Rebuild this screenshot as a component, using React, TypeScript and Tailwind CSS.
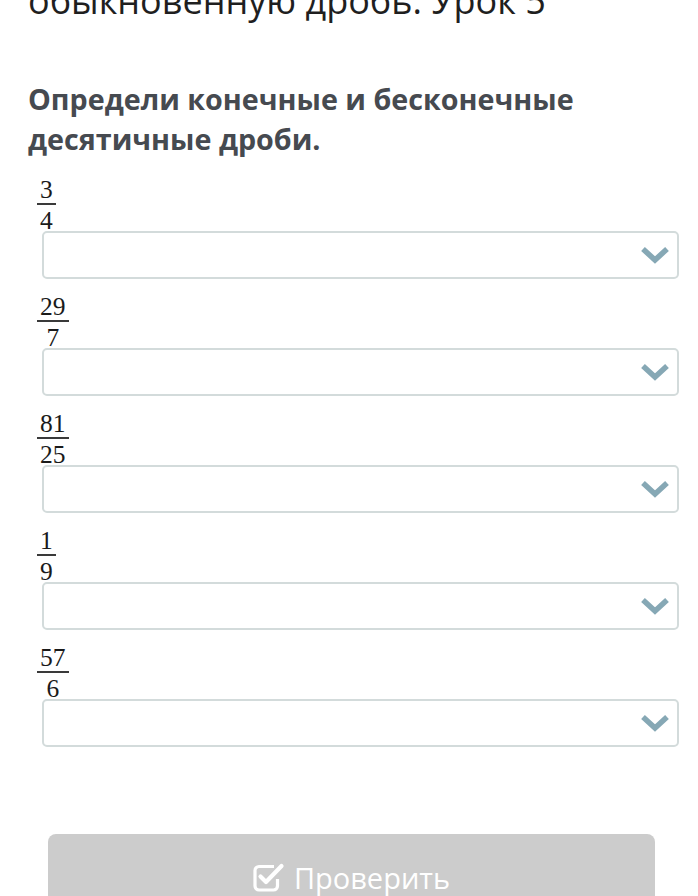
import React from "react";

const items: [string, string][] = [
  ["3", "4"],
  ["29", "7"],
  ["81", "25"],
  ["1", "9"],
  ["57", "6"],
];

function Chevron() {
  return (
    <svg width="30" height="20" viewBox="0 0 30 20" fill="none">
      <polyline
        points="3,4 15,15 27,4"
        stroke="#86a8b5"
        strokeWidth="5.5"
        strokeLinecap="butt"
        strokeLinejoin="miter"
      />
    </svg>
  );
}

function CheckIcon() {
  return (
    <svg width="32" height="30" viewBox="0 0 32 30" fill="none">
      <path
        d="M21 4.5 H6 a4 4 0 0 0 -4 4 V24 a4 4 0 0 0 4 4 H20.5 a4 4 0 0 0 4 -4 V17"
        stroke="white"
        strokeWidth="3.2"
        fill="none"
      />
      <path
        d="M7.5 14.5 L13 20 L28.5 4"
        stroke="white"
        strokeWidth="4.2"
        fill="none"
        strokeLinecap="round"
        strokeLinejoin="round"
      />
    </svg>
  );
}

export default function App() {
  return (
    <div className="w-[698px] h-[896px] overflow-hidden bg-white relative">
      <div
        className="mt-[-23px] ml-[28px] text-[36px] leading-[48px] text-[#1f1f1f] whitespace-nowrap"
        style={{ fontFamily: '"Open Sans", sans-serif' }}
      >
        обыкновенную дробь. Урок 5
      </div>
      <div
        className="mt-[54px] ml-[28px] text-[28.7px] leading-[40px] font-bold text-[#464a50]"
        style={{ fontFamily: '"Open Sans", sans-serif' }}
      >
        Определи конечные и бесконечные
        <br />
        десятичные дроби.
      </div>
      <div className="mt-[19px] flex flex-col gap-[16px]">
        {items.map(([n, d], i) => (
          <div key={i} className="flex flex-col">
            <div className="pl-[37px] flex">
              <div
                className="flex flex-col items-stretch text-[25.5px] leading-[24px] text-[#1a1a1a] text-center"
                style={{ fontFamily: '"Liberation Serif", serif' }}
              >
                <div className="px-[3px]">{n}</div>
                <div className="h-[2px] mt-[1px] mb-[4px] bg-[#3a3a3a]" />
                <div className="px-[3px]">{d}</div>
              </div>
            </div>
            <div className="mt-[-2px] ml-[42px] mr-[19px] h-[48px] border-2 border-[#d3dbdb] rounded-[5px] flex items-center justify-end pr-[7px]">
              <Chevron />
            </div>
          </div>
        ))}
      </div>
      <div className="absolute left-[48px] top-[834px] w-[607px] h-[86px] bg-[#cccccc] rounded-[8px] flex items-center justify-center gap-[9px]">
        <CheckIcon />
        <span
          className="text-[29px] text-white leading-none"
          style={{ fontFamily: '"Open Sans", sans-serif' }}
        >
          Проверить
        </span>
      </div>
    </div>
  );
}
